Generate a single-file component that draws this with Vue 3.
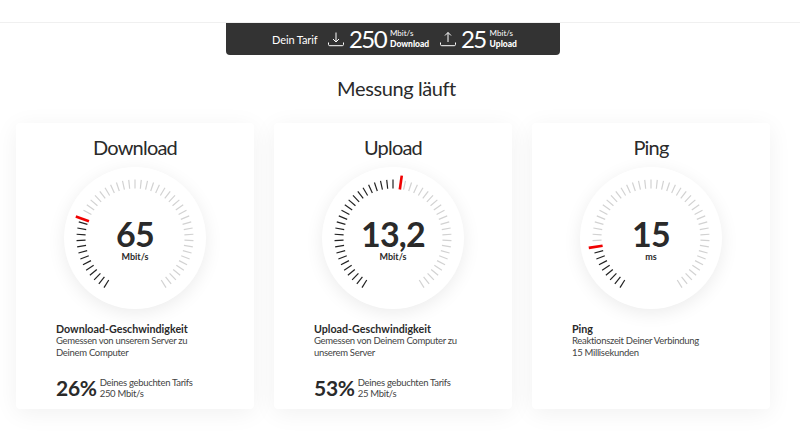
<script setup>
const CX = 71
const CY = 71
const START = -148
const STEP = 6.1667

const cards = [
  {
    title: 'Download', value: '65', unit: 'Mbit/s', needle: -70,
    head: 'Download-Geschwindigkeit',
    lines: ['Gemessen von unserem Server zu', 'Deinem Computer'],
    pct: '26%', plan: '250 Mbit/s',
  },
  {
    title: 'Upload', value: '13,2', unit: 'Mbit/s', needle: 8,
    head: 'Upload-Geschwindigkeit',
    lines: ['Gemessen von Deinem Computer zu', 'unserem Server'],
    pct: '53%', plan: '25 Mbit/s',
  },
  {
    title: 'Ping', value: '15', unit: 'ms', needle: -99,
    head: 'Ping',
    lines: ['Reaktionszeit Deiner Verbindung', '15 Millisekunden'],
  },
]

function line(angle, r1, r2) {
  const a = (angle * Math.PI) / 180
  return {
    x1: CX + Math.sin(a) * r1,
    y1: CY - Math.cos(a) * r1,
    x2: CX + Math.sin(a) * r2,
    y2: CY - Math.cos(a) * r2,
  }
}

function ticks(needle) {
  const out = []
  for (let i = 0; i < 49; i++) {
    const angle = START + i * STEP
    if (Math.abs(angle - needle) < 2.5) continue
    out.push({ ...line(angle, 49.5, 58.5), on: angle < needle })
  }
  return out
}
</script>

<template>
  <div class="page">
    <div class="topline"></div>
    <div class="plan-bar">
      <span class="plan-label">Dein Tarif</span>
      <svg class="plan-icon" viewBox="0 0 16 16" width="16" height="16">
        <path d="M8 1.5v9.5M5 8l3 3 3-3M.5 11.5v2c0 .8.5 1.2 1.2 1.2h12.6c.7 0 1.2-.4 1.2-1.2v-2" />
      </svg>
      <span class="plan-num">250</span>
      <span class="plan-unit first"><span>Mbit/s</span><b>Download</b></span>
      <svg class="plan-icon" viewBox="0 0 16 16" width="16" height="16">
        <path d="M8 11V1.5M5 4.5l3-3 3 3M.5 11.5v2c0 .8.5 1.2 1.2 1.2h12.6c.7 0 1.2-.4 1.2-1.2v-2" />
      </svg>
      <span class="plan-num">25</span>
      <span class="plan-unit"><span>Mbit/s</span><b>Upload</b></span>
    </div>

    <h1 class="title">Messung läuft</h1>

    <div class="cards">
      <section v-for="card in cards" :key="card.title" class="card">
        <h2 class="card-title">{{ card.title }}</h2>
        <div class="gauge">
          <svg viewBox="0 0 142 142" width="142" height="142">
            <line
              v-for="(t, i) in ticks(card.needle)"
              :key="i"
              :x1="t.x1" :y1="t.y1" :x2="t.x2" :y2="t.y2"
              :class="t.on ? 'tick-on' : 'tick-off'"
            />
            <line v-bind="line(card.needle, 49, 63)" class="tick-red" />
          </svg>
          <div class="readout">
            <div class="value">{{ card.value }}</div>
            <div class="unit">{{ card.unit }}</div>
          </div>
        </div>
        <div class="info">
          <h3>{{ card.head }}</h3>
          <p v-for="l in card.lines" :key="l">{{ l }}</p>
        </div>
        <div v-if="card.pct" class="share">
          <span class="pct">{{ card.pct }}</span>
          <div class="share-text">
            <p>Deines gebuchten Tarifs</p>
            <p>{{ card.plan }}</p>
          </div>
        </div>
      </section>
    </div>
  </div>
</template>

<style>
html, body {
  margin: 0;
  background: #fff;
}
</style>

<style scoped>
.page {
  width: 800px;
  height: 433px;
  overflow: hidden;
  font-family: Lato, "Open Sans", sans-serif;
  color: #2a2a2a;
}

.topline {
  height: 23px;
  box-sizing: border-box;
  border-bottom: 1px solid #f0f0f0;
}

.plan-bar {
  width: 334px;
  height: 32px;
  margin-left: 226px;
  background: #333;
  border-radius: 0 0 4px 4px;
  color: #fff;
  display: flex;
  align-items: center;
  padding-left: 46px;
  box-sizing: border-box;
}

.plan-label {
  font-size: 11px;
  letter-spacing: -0.1px;
  width: 56px;
}

.plan-icon {
  fill: none;
  stroke: #fff;
  stroke-width: 1;
  margin-right: 5px;
}

.plan-num {
  font-size: 24px;
  line-height: 32px;
  letter-spacing: -1.6px;
  margin-right: 4px;
}

.plan-unit {
  display: flex;
  flex-direction: column;
  font-size: 8px;
  line-height: 11px;
}

.plan-unit.first {
  width: 50px;
}

.plan-unit b {
  font-weight: 900;
  font-size: 8.5px;
}

.title {
  margin: 21px 0 0 -7px;
  text-align: center;
  font-size: 20px;
  letter-spacing: -0.4px;
  line-height: 24px;
  font-weight: 400;
}

.cards {
  margin: 23px 0 0 16px;
  display: grid;
  grid-template-columns: repeat(3, 238px);
  gap: 20px;
}

.card {
  height: 286px;
  background: #fff;
  border-radius: 4px;
  box-shadow: 0 4px 24px rgba(0, 0, 0, 0.06);
  padding: 12px 0 0 40px;
  box-sizing: border-box;
}

.card-title {
  margin: 0 0 0 -40px;
  text-align: center;
  font-size: 20px;
  letter-spacing: -0.8px;
  line-height: 24px;
  font-weight: 400;
}

.gauge {
  width: 142px;
  height: 142px;
  margin: 8px 0 0 8px;
  border-radius: 50%;
  background: #fff;
  box-shadow: 0 4px 18px rgba(0, 0, 0, 0.08);
  display: grid;
}

.gauge > * {
  grid-area: 1 / 1;
}

.gauge svg {
  display: block;
}

.tick-on {
  stroke: #222;
  stroke-width: 1.2;
}

.tick-off {
  stroke: #d2d2d2;
  stroke-width: 1.2;
}

.tick-red {
  stroke: #f00000;
  stroke-width: 2.6;
}

.readout {
  text-align: center;
  padding-top: 52px;
}

.value {
  font-size: 34px;
  letter-spacing: -0.8px;
  line-height: 29px;
  font-weight: 700;
}

.unit {
  font-size: 9px;
  line-height: 10px;
  font-weight: 700;
  margin-top: 4px;
}

.info {
  margin-top: 14px;
}

.info h3 {
  margin: 0;
  font-size: 10.7px;
  line-height: 12px;
  font-weight: 700;
}

.info p,
.share-text p {
  margin: 0;
  font-size: 9.5px;
  letter-spacing: -0.3px;
  line-height: 11.5px;
  color: #444;
}

.share {
  display: flex;
  align-items: center;
  gap: 3px;
  margin-top: 17px;
}

.pct {
  font-size: 21px;
  letter-spacing: -0.3px;
  line-height: 26px;
  font-weight: 700;
}
</style>
